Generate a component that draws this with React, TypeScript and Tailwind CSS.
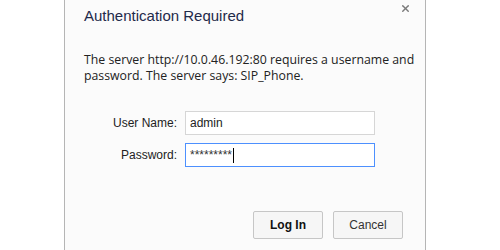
import { X } from "lucide-react";

const sans = { fontFamily: '"Liberation Sans", Arial, sans-serif' };
const body = { fontFamily: '"Open Sans", "Liberation Sans", Arial, sans-serif' };

const Field = ({ label, value, focused }: { label: string; value: string; focused?: boolean }) => (
    <div className="flex items-center gap-[8px]">
        <label className="w-[93px] text-right text-[12px] text-[#222]">{label}</label>
        <div
            className={
                focused
                    ? "flex h-[24px] w-[190px] items-center border border-[#4d90fe] bg-white px-[4px] text-[12px] text-[#333]"
                    : "flex h-[24px] w-[190px] items-center border border-[#d6d6d6] bg-white px-[4px] text-[12px] text-[#222]"
            }
        >
            {value}
            {focused && <span className="ml-[1px] h-[15px] w-[1px] bg-black" />}
        </div>
    </div>
);

const App = () => {
    return (
        <div className="h-[250px] w-[500px] overflow-hidden bg-white" style={sans}>
            <div className="ml-[64px] flex h-[250px] w-[362px] flex-col border-x border-[#b5b5b5] bg-[#fbfbfb]">
                <header className="flex items-start justify-between pl-[19px] pr-[14px] pt-[6px]">
                    <h1 className="text-[15px] leading-[20px] text-[#1f2a4a]">Authentication Required</h1>
                    <X size={11} strokeWidth={3.2} className="-mt-[3px] text-[#7a7a7a]" />
                </header>
                <p className="mt-[26px] pl-[19px] pr-[6px] text-[12.3px] leading-[16px] text-[#222]" style={body}>
                    The server http://10.0.46.192:80 requires a username and password. The server says: SIP_Phone.
                </p>
                <div className="mt-[27px] flex flex-col gap-[8px] pl-[19px]">
                    <Field label="User Name:" value="admin" />
                    <Field label="Password:" value="*********" focused />
                </div>
                <div className="mt-[44px] flex justify-end gap-[10px] pr-[22px]">
                    <button className="h-[28px] w-[70px] rounded-[2px] border border-[#c6c6c6] bg-[#f6f6f6] text-[12px] font-bold text-[#111]">
                        Log In
                    </button>
                    <button className="h-[28px] w-[70px] rounded-[2px] border border-[#c6c6c6] bg-[#f6f6f6] text-[12px] text-[#333]">
                        Cancel
                    </button>
                </div>
            </div>
        </div>
    );
};

export default App;
